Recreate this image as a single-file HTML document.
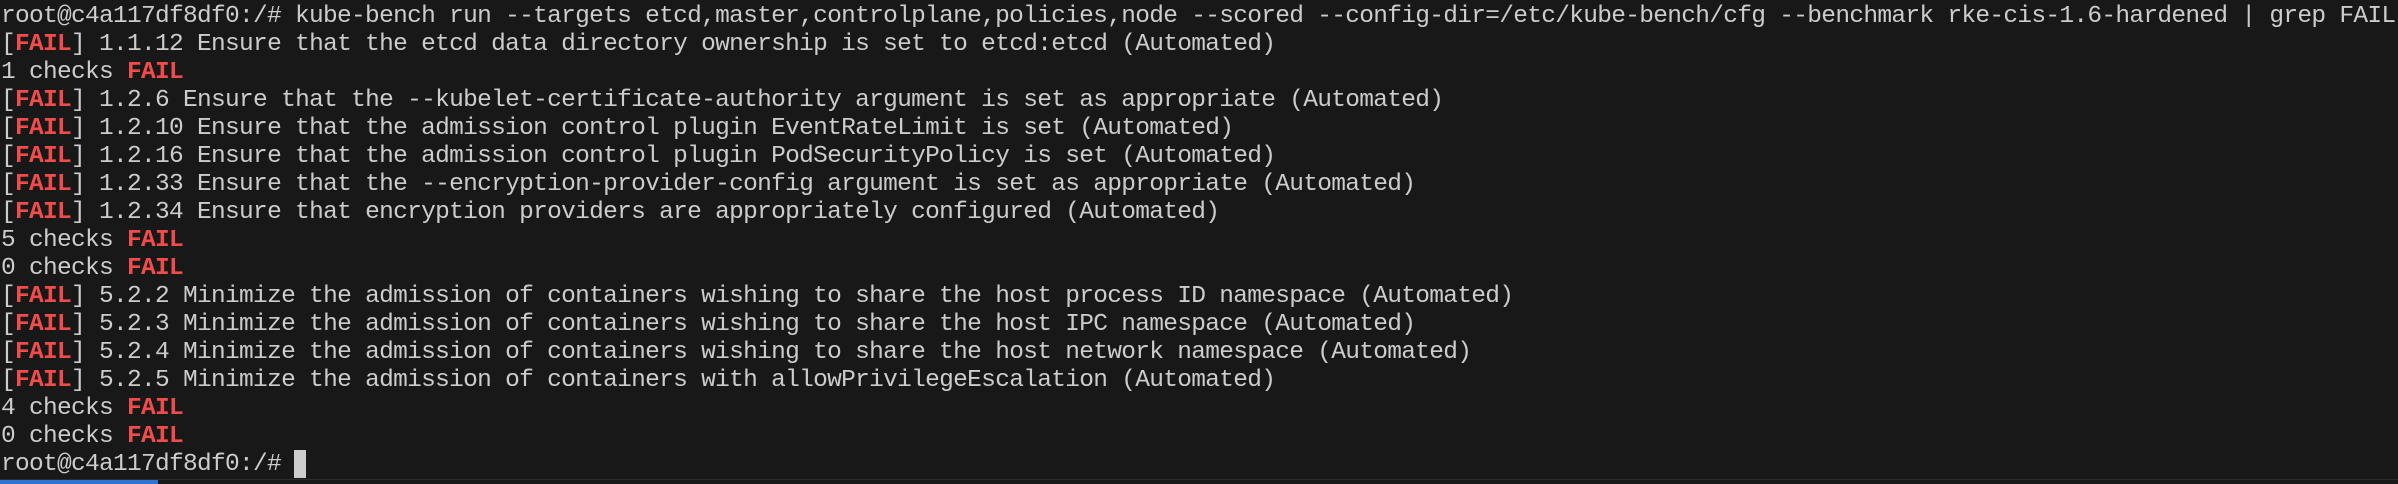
<!DOCTYPE html>
<html><head><meta charset="utf-8"><style>
html,body{margin:0;padding:0;}
body{width:2398px;height:484px;background:#181818;overflow:hidden;position:relative;}
pre{margin:0;position:absolute;left:1px;top:3px;font-family:"Liberation Mono",monospace;font-size:24.5px;letter-spacing:-0.7px;line-height:28px;color:#cccccc;white-space:pre;}
.r{color:#f14c4c;font-weight:bold;}
.cur{position:absolute;left:294px;top:450px;width:12px;height:28px;background:#cccccc;}
.line{position:absolute;left:0;top:479px;width:2398px;height:1px;background:#2b2b2b;}
.bar{position:absolute;left:0;top:480px;width:158px;height:4px;background:#2f74d0;}
</style></head><body>
<pre>root@c4a117df8df0:/# kube-bench run --targets etcd,master,controlplane,policies,node --scored --config-dir=/etc/kube-bench/cfg --benchmark rke-cis-1.6-hardened | grep FAIL
[<span class="r">FAIL</span>] 1.1.12 Ensure that the etcd data directory ownership is set to etcd:etcd (Automated)
1 checks <span class="r">FAIL</span>
[<span class="r">FAIL</span>] 1.2.6 Ensure that the --kubelet-certificate-authority argument is set as appropriate (Automated)
[<span class="r">FAIL</span>] 1.2.10 Ensure that the admission control plugin EventRateLimit is set (Automated)
[<span class="r">FAIL</span>] 1.2.16 Ensure that the admission control plugin PodSecurityPolicy is set (Automated)
[<span class="r">FAIL</span>] 1.2.33 Ensure that the --encryption-provider-config argument is set as appropriate (Automated)
[<span class="r">FAIL</span>] 1.2.34 Ensure that encryption providers are appropriately configured (Automated)
5 checks <span class="r">FAIL</span>
0 checks <span class="r">FAIL</span>
[<span class="r">FAIL</span>] 5.2.2 Minimize the admission of containers wishing to share the host process ID namespace (Automated)
[<span class="r">FAIL</span>] 5.2.3 Minimize the admission of containers wishing to share the host IPC namespace (Automated)
[<span class="r">FAIL</span>] 5.2.4 Minimize the admission of containers wishing to share the host network namespace (Automated)
[<span class="r">FAIL</span>] 5.2.5 Minimize the admission of containers with allowPrivilegeEscalation (Automated)
4 checks <span class="r">FAIL</span>
0 checks <span class="r">FAIL</span>
root@c4a117df8df0:/# </pre>
<div class="cur"></div>
<div class="line"></div>
<div class="bar"></div>
</body></html>
